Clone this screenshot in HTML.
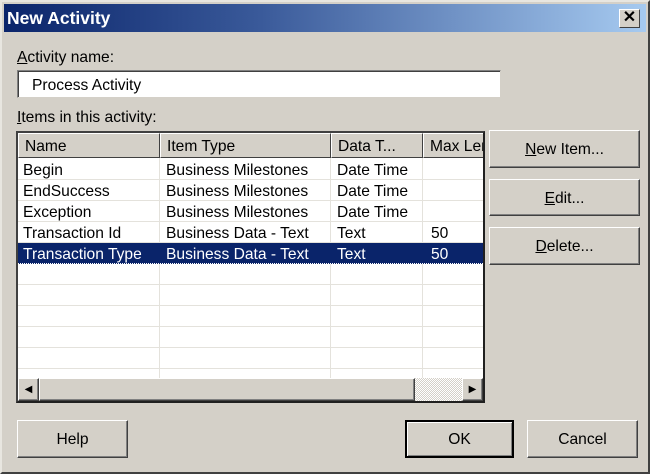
<!DOCTYPE html><html><head><style>
*{margin:0;padding:0;box-sizing:border-box}
body{width:650px;height:474px;background:#d4d0c8;font-family:"Liberation Sans",sans-serif;font-size:15.6px;color:#000;position:relative;overflow:hidden}
.win{position:absolute;left:0;top:0;width:650px;height:474px;border:2px solid;border-color:#e8e6e0 #404040 #404040 #e8e6e0}
.title{position:absolute;left:4px;top:4px;width:642px;height:28px;background:linear-gradient(90deg,#0a246a,#3a5a9a 40%,#a6caf0);color:#fff;font-weight:bold;font-size:17.5px;line-height:29px;padding-left:3px}
.x{position:absolute;right:6px;top:5px;width:21px;height:19px;background:#d4d0c8;border:1px solid;border-color:#fff #404040 #404040 #fff;color:#000;font-size:16px;line-height:16px;text-align:center;font-weight:bold}
.a{position:absolute;white-space:nowrap}
.tb{position:absolute;left:17px;top:70px;width:484px;height:28px;background:#fff;border:1px solid;border-color:#808080 #d4d0c8 #d4d0c8 #808080;box-shadow:inset 1px 1px 0 #404040;padding-left:14px;line-height:29px}
.list{position:absolute;left:16px;top:131px;width:469px;height:272px;background:#fff;border:2px solid;border-color:#404040 #202020 #202020 #404040;overflow:hidden}
.hd{position:absolute;top:0;height:25px;background:#d4d0c8;border:1px solid;border-color:#fff #404040 #404040 #fff;line-height:25px;padding-left:6px;white-space:nowrap;overflow:hidden}
.row{position:absolute;left:0;width:465px;height:21px;border-bottom:1px solid #e4e2dc}
.c{position:absolute;top:0;line-height:23px;white-space:nowrap}
.vl{position:absolute;top:25px;width:1px;height:220px;background:#e4e2dc}
.sel{background:#0a246a;color:#fff}
.btn{position:absolute;background:#d4d0c8;border:1px solid;border-color:#fff #404040 #404040 #fff;box-shadow:inset -1px -1px 0 #808080;text-align:center}
</style></head><body>
<div class="win"></div>
<div class="title">New Activity<div class="x">✕</div></div>
<div class="a" style="left:17px;top:49px"><u>A</u>ctivity name:</div>
<div class="tb">Process Activity</div>
<div class="a" style="left:17px;top:109px"><u>I</u>tems in this activity:</div>
<div class="list">
<div class="hd" style="left:0;width:142px">Name</div>
<div class="hd" style="left:142px;width:171px">Item Type</div>
<div class="hd" style="left:313px;width:92px">Data T...</div>
<div class="hd" style="left:405px;width:70px">Max Len</div>
<div class="vl" style="left:141px"></div><div class="vl" style="left:312px"></div><div class="vl" style="left:404px"></div>
<div class="row" style="top:26px"><span class="c" style="left:5px">Begin</span><span class="c" style="left:148px">Business Milestones</span><span class="c" style="left:319px">Date Time</span></div>
<div class="row" style="top:47px"><span class="c" style="left:5px">EndSuccess</span><span class="c" style="left:148px">Business Milestones</span><span class="c" style="left:319px">Date Time</span></div>
<div class="row" style="top:68px"><span class="c" style="left:5px">Exception</span><span class="c" style="left:148px">Business Milestones</span><span class="c" style="left:319px">Date Time</span></div>
<div class="row" style="top:89px"><span class="c" style="left:5px">Transaction Id</span><span class="c" style="left:148px">Business Data - Text</span><span class="c" style="left:319px">Text</span><span class="c" style="left:413px">50</span></div>
<div class="row sel" style="top:110px;border-bottom:1px dotted #fff"><span class="c" style="left:5px">Transaction Type</span><span class="c" style="left:148px">Business Data - Text</span><span class="c" style="left:319px">Text</span><span class="c" style="left:413px">50</span></div>
<div class="row" style="top:131px"></div><div class="row" style="top:152px"></div><div class="row" style="top:173px"></div><div class="row" style="top:194px"></div><div class="row" style="top:215px"></div>
<div style="position:absolute;left:0;top:245px;width:465px;height:23px;background:#d4d0c8">
<div class="btn" style="left:0;top:0;width:21px;height:23px;font-size:10px;line-height:21px">◀</div>
<div style="position:absolute;left:397px;top:0;width:47px;height:23px;background:repeating-conic-gradient(#fff 0 25%,#d4d0c8 0 50%) 0 0/2px 2px"></div>
<div class="btn" style="left:21px;top:0;width:376px;height:23px"></div>
<div class="btn" style="left:444px;top:0;width:21px;height:23px;font-size:10px;line-height:21px">▶</div>
</div>
</div>
<div class="btn" style="left:489px;top:130px;width:151px;height:38px;line-height:38px"><u>N</u>ew Item...</div>
<div class="btn" style="left:489px;top:179px;width:151px;height:37px;line-height:37px"><u>E</u>dit...</div>
<div class="btn" style="left:489px;top:227px;width:151px;height:38px;line-height:38px"><u>D</u>elete...</div>
<div class="btn" style="left:17px;top:420px;width:111px;height:38px;line-height:38px">Help</div>
<div class="btn" style="left:405px;top:420px;width:109px;height:38px;line-height:36px;border:2px solid #000;box-shadow:inset 1px 1px 0 #fff,inset -1px -1px 0 #808080">OK</div>
<div class="btn" style="left:527px;top:420px;width:111px;height:38px;line-height:38px">Cancel</div>
</body></html>
